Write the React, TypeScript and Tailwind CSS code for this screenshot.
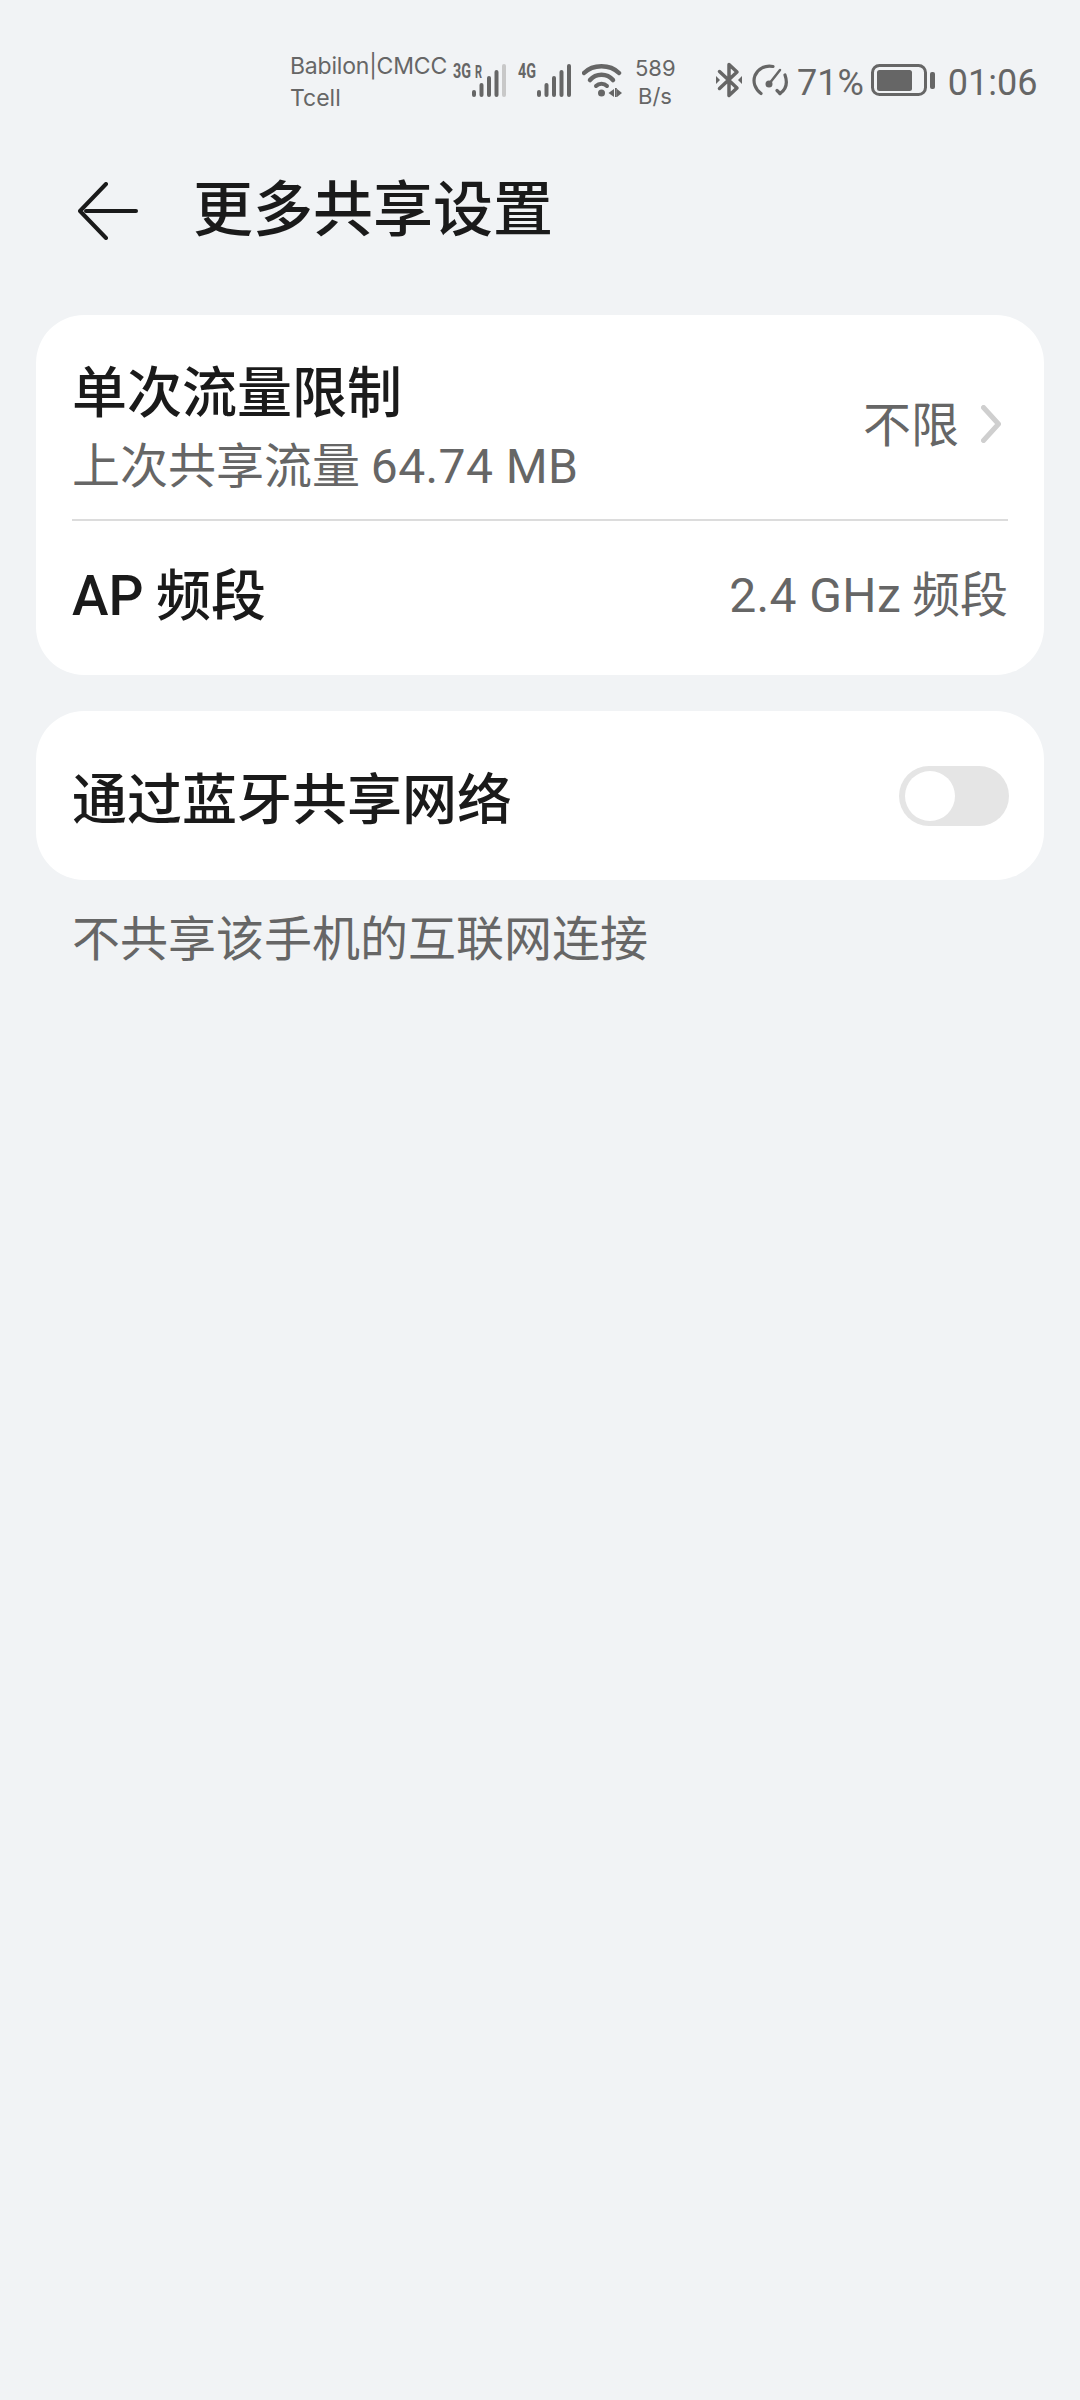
const cjk = { fontFamily: '"Noto Sans CJK SC", "Noto Sans", sans-serif' };
const latin = { fontFamily: 'Roboto, sans-serif' };

function Signal({ label, roaming, lastDim }: { label: string; roaming?: boolean; lastDim?: boolean }) {
  return (
    <svg width="54" height="34" viewBox="0 0 54 34" className="block overflow-visible">
      <text x="0" y="15" fontSize="20" fontWeight="700" fill="#666" fontFamily="Roboto, sans-serif" textLength={18} lengthAdjust="spacingAndGlyphs">
        {label}
      </text>
      {roaming && (
        <text x="22" y="15" fontSize="18" fontWeight="700" fill="#666" fontFamily="Roboto, sans-serif" textLength={7} lengthAdjust="spacingAndGlyphs">
          R
        </text>
      )}
      <rect x="19" y="27" width="4" height="7" rx="2" fill="#666" />
      <rect x="26.5" y="20" width="4" height="14" rx="2" fill="#666" />
      <rect x="34" y="13" width="4" height="21" rx="2" fill="#666" />
      <rect x="41.5" y="7" width="4" height="27" rx="2" fill="#666" />
      <rect x="49" y="1" width="4" height="33" rx="2" fill={lastDim ? '#c8c8c8' : '#666'} />
    </svg>
  );
}

function Wifi() {
  return (
    <svg width="40" height="34" viewBox="0 0 40 34" fill="none" className="block">
      <path d="M2 10C11 1 28 1 37 10" stroke="#666" strokeWidth="4.5" strokeLinecap="round" />
      <path d="M8 17C14 10 25 10 31 17" stroke="#666" strokeWidth="4.5" strokeLinecap="round" />
      <path d="M14 23C17 20 22 20 25 23" stroke="#666" strokeWidth="4" strokeLinecap="round" />
      <circle cx="19.5" cy="30" r="3.5" fill="#666" />
      <path d="M32 26V34L26.5 30Z" fill="#666" />
      <rect x="33" y="25" width="1.8" height="9" fill="#666" />
      <path d="M35 26V34L40 30Z" fill="#666" />
    </svg>
  );
}

function Bluetooth() {
  return (
    <svg width="26" height="36" viewBox="0 0 26 36" fill="none" className="block">
      <path d="M3.5 9.5L21 26L13 33.5V2.5L21 10L3.5 26.500" stroke="#666" strokeWidth="3.5" strokeLinecap="round" strokeLinejoin="round" />
      <path d="M0 14V22L4 18Z" fill="#666" />
      <path d="M26 14V22L22 18Z" fill="#666" />
    </svg>
  );
}

function Speed() {
  return (
    <svg width="36" height="32" viewBox="0 0 36 32" fill="none" className="block">
      <path d="M9 29.500C3 25 0.500 18 3 11.500C6 4.500 13 1 21 2.500" stroke="#666" strokeWidth="3.200" strokeLinecap="round" />
      <path d="M33 11C35.500 18 34.500 25 28 29.500" stroke="#666" strokeWidth="3.200" strokeLinecap="round" />
      <path d="M28 29.500L25 26.500" stroke="#666" strokeWidth="3.200" strokeLinecap="round" />
      <circle cx="17" cy="20" r="3.500" fill="#666" />
      <path d="M17 20L28 6" stroke="#666" strokeWidth="2.500" strokeLinecap="round" />
    </svg>
  );
}

function Battery() {
  return (
    <svg width="64" height="32" viewBox="0 0 64 32" fill="none" className="block">
      <rect x="1.500" y="1.500" width="53" height="29" rx="7" stroke="#666" strokeWidth="3" />
      <rect x="6" y="6" width="35" height="21" rx="2.500" fill="#666" />
      <rect x="59" y="8" width="5" height="17" rx="2" fill="#666" />
    </svg>
  );
}

function StatusBar() {
  return (
    <div className="h-[160px] flex items-center pl-[290px]" style={{ fontFamily: 'Inter, sans-serif' }}>
      <div className="w-[163px] text-[23px] leading-[32px] text-[#666] mt-[3px]">
        <div className="whitespace-nowrap tracking-[-0.2px]">Babilon|CMCC</div>
        <div>Tcell</div>
      </div>
      <Signal label="3G" roaming lastDim />
      <div className="ml-[11px]"><Signal label="4G" /></div>
      <div className="ml-[10px]"><Wifi /></div>
      <div className="w-[40px] ml-[13px] text-[22px] leading-[28px] text-[#666] text-center mt-[3px]">
        <div>589</div>
        <div>B/s</div>
      </div>
      <div className="ml-[41px]"><Bluetooth /></div>
      <div className="ml-[10px]"><Speed /></div>
      <div className="ml-[9px] text-[36px] text-[#666] leading-none mt-[5px]" style={latin}>71%</div>
      <div className="ml-[7px]"><Battery /></div>
      <div className="ml-[13px] text-[36px] text-[#666] leading-none whitespace-nowrap mt-[5px]" style={latin}>01:06</div>
    </div>
  );
}

export default function App() {
  return (
    <div className="w-[1080px] h-[2400px] bg-[#f1f3f5] overflow-hidden" style={cjk}>
      <StatusBar />

      {/* Header */}
      <div className="h-[96px] flex items-center pl-[78px]">
        <svg width="60" height="58" viewBox="0 0 60 58" fill="none" className="block mt-[6px]">
          <path d="M28 2L2 29L28 56" stroke="#1a1a1a" strokeWidth="4" strokeLinecap="round" strokeLinejoin="round" />
          <path d="M8 29H58" stroke="#1a1a1a" strokeWidth="4" strokeLinecap="round" />
        </svg>
        <h1 className="ml-[55px] mb-[6px] text-[60px] font-medium text-[#1a1a1a] leading-none">更多共享设置</h1>
      </div>

      <div className="px-[36px] pt-[59px]">
        {/* Limit + band card */}
        <div className="bg-white rounded-[48px] h-[360px] px-[36px]">
          <div className="h-[206px] pt-[14px] flex items-center justify-between border-b-2 border-[#dcdcdc]">
            <div className="pt-[6px] flex flex-col gap-[2px]">
              <div className="text-[55px] font-medium text-[#1a1a1a] leading-[72px]">单次流量限制</div>
              <div className="text-[48px] text-[#666] leading-[72px] whitespace-nowrap">
                上次共享流量 <span className="tracking-[0.4px]" style={latin}>64.74 MB</span>
              </div>
            </div>
            <div className="flex items-center">
              <span className="text-[48px] text-[#666] leading-none mb-[6px]">不限</span>
              <svg width="20" height="38" viewBox="0 0 20 38" fill="none" className="block ml-[22px] mr-[7px]">
                <path d="M2.500 2.500L17.500 19L2.500 35.500" stroke="#cfcfcf" strokeWidth="5" strokeLinecap="round" strokeLinejoin="round" />
              </svg>
            </div>
          </div>
          <div className="h-[154px] pb-[8px] flex items-center justify-between">
            <div className="text-[55px] font-medium text-[#1a1a1a] leading-none">
              <span style={latin}>AP</span> 频段
            </div>
            <div className="text-[48px] text-[#666] leading-none mb-[2px]">
              <span className="tracking-[0.4px]" style={latin}>2.4 GHz</span> 频段
            </div>
          </div>
        </div>

        {/* Bluetooth tethering card */}
        <div className="bg-white rounded-[48px] h-[169px] pl-[36px] pr-[35px] mt-[36px] flex items-center justify-between">
          <div className="text-[55px] font-medium text-[#1a1a1a] leading-none">通过蓝牙共享网络</div>
          <div className="w-[110px] h-[60px] rounded-full bg-[#e5e5e5] py-[5px] pl-[6px]">
            <div className="w-[50px] h-[50px] rounded-full bg-white" />
          </div>
        </div>

        <p className="text-[48px] text-[#666] leading-none px-[36px] mt-[31px]">不共享该手机的互联网连接</p>
      </div>
    </div>
  );
}
